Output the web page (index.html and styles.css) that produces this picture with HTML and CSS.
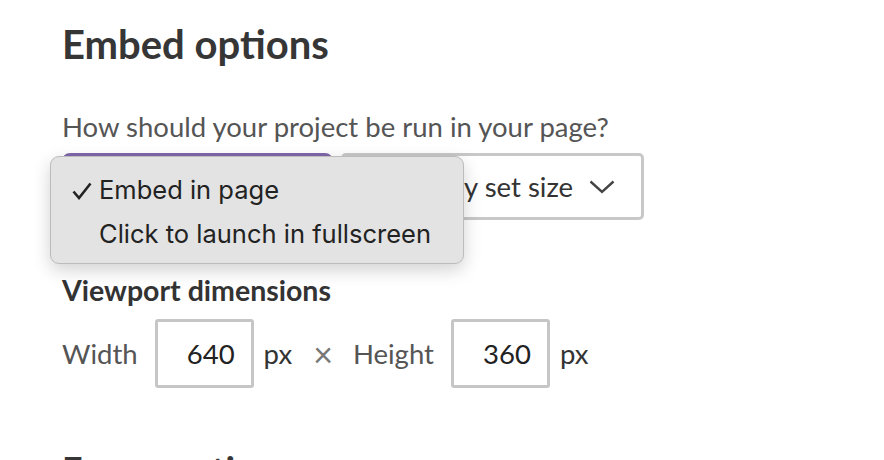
FILE: index.html
```html
<!DOCTYPE html>
<html lang="en">
<head>
  <meta charset="UTF-8">
  <title>Embed options</title>
  <link rel="stylesheet" href="styles.css">
</head>
<body>
  <div class="page">
    <h1>Embed options</h1>

    <!-- Run mode -->
    <p class="question">How should your project be run in your page?</p>
    <div class="select-row">
      <div class="select select-mode">Embed in page</div>
      <div class="select select-size">
        <span>Manually set size</span>
        <svg class="chevron" width="26" height="14" viewBox="0 0 26 14">
          <polyline points="1.5,1.5 13,12 24.5,1.5" fill="none" stroke="#444" stroke-width="2.4"/>
        </svg>
      </div>

      <!-- Open dropdown -->
      <ul class="menu">
        <li class="menu-item checked">
          <svg class="check" width="20" height="18" viewBox="0 0 20 18">
            <polyline points="1.5,9.5 7,16 18.5,1.5" fill="none" stroke="#222" stroke-width="2.6"/>
          </svg>
          Embed in page
        </li>
        <li class="menu-item">Click to launch in fullscreen</li>
      </ul>
    </div>

    <!-- Viewport -->
    <h3 class="label">Viewport dimensions</h3>
    <div class="dims">
      <span class="dim-name">Width</span>
      <div class="num-input">640</div>
      <span class="unit">px</span>
      <span class="times">&times;</span>
      <span class="dim-name">Height</span>
      <div class="num-input">360</div>
      <span class="unit">px</span>
    </div>

    <h2>Frame options</h2>
  </div>
</body>
</html>
```

FILE: styles.css
```css
/* General Styles */
body {
  margin: 0;
  background-color: #ffffff;
  font-family: Lato, "Liberation Sans", sans-serif;
  color: #333;
  overflow: hidden;
}

.page {
  padding: 0 62px;
}

h1 {
  margin: 20px 0 0;
  font-size: 40px;
  line-height: 48px;
  font-weight: 700;
  color: #363636;
}

.question {
  margin: 42px 0 0;
  font-size: 27.5px;
  line-height: 33px;
  color: #555;
}

/* Selects */
.select-row {
  position: relative;
  display: flex;
  gap: 8px;
  margin-top: 10px;
}

.select {
  box-sizing: border-box;
  height: 67px;
  border: 3px solid #c8c8c8;
  border-radius: 5px;
  background: #fff;
  display: flex;
  align-items: center;
  font-size: 27.5px;
  color: #333;
}

.select-mode {
  width: 271px;
  border-color: #7f66aa;
  background: #7f66aa;
  color: #fff;
  padding-left: 20px;
  border-radius: 8px 8px 5px 5px;
}

.select-size {
  width: 303px;
  padding-left: 24px;
}

.chevron {
  margin-left: 16px;
}

/* Dropdown menu */
.menu {
  position: absolute;
  left: -12px;
  top: 3px;
  margin: 0;
  padding: 11px 0 7px;
  list-style: none;
  width: 414px;
  box-sizing: border-box;
  background: #e3e3e3;
  border: 1px solid #bcbcbc;
  border-radius: 9px;
  box-shadow: 0 6px 18px rgba(0, 0, 0, 0.18);
  font-family: Inter, "Noto Sans", sans-serif;
  font-size: 25.5px;
  color: #222;
}

.menu-item {
  position: relative;
  height: 44px;
  line-height: 44px;
  padding-left: 48px;
}

.check {
  position: absolute;
  left: 21px;
  top: 14px;
}

/* Viewport */
.label {
  margin: 53px 0 0;
  font-size: 28.5px;
  line-height: 34px;
  font-weight: 700;
  color: #333;
}

.dims {
  display: flex;
  align-items: center;
  margin-top: 12px;
  font-size: 27.5px;
}

.dim-name {
  color: #555;
}

.num-input {
  box-sizing: border-box;
  width: 99px;
  height: 69px;
  line-height: 63px;
  border: 3px solid #c6c6c6;
  border-radius: 3px;
  text-align: right;
  padding-right: 16px;
  color: #222;
  margin: 0 10px 0 17px;
}

.unit {
  color: #333;
}

.times {
  color: #777;
  font-size: 34px;
  line-height: 30px;
  margin: 0 20px 0 21px;
}

h2 {
  margin: 59px 0 0;
  font-size: 36px;
  line-height: 44px;
  font-weight: 700;
  color: #363636;
}
```
